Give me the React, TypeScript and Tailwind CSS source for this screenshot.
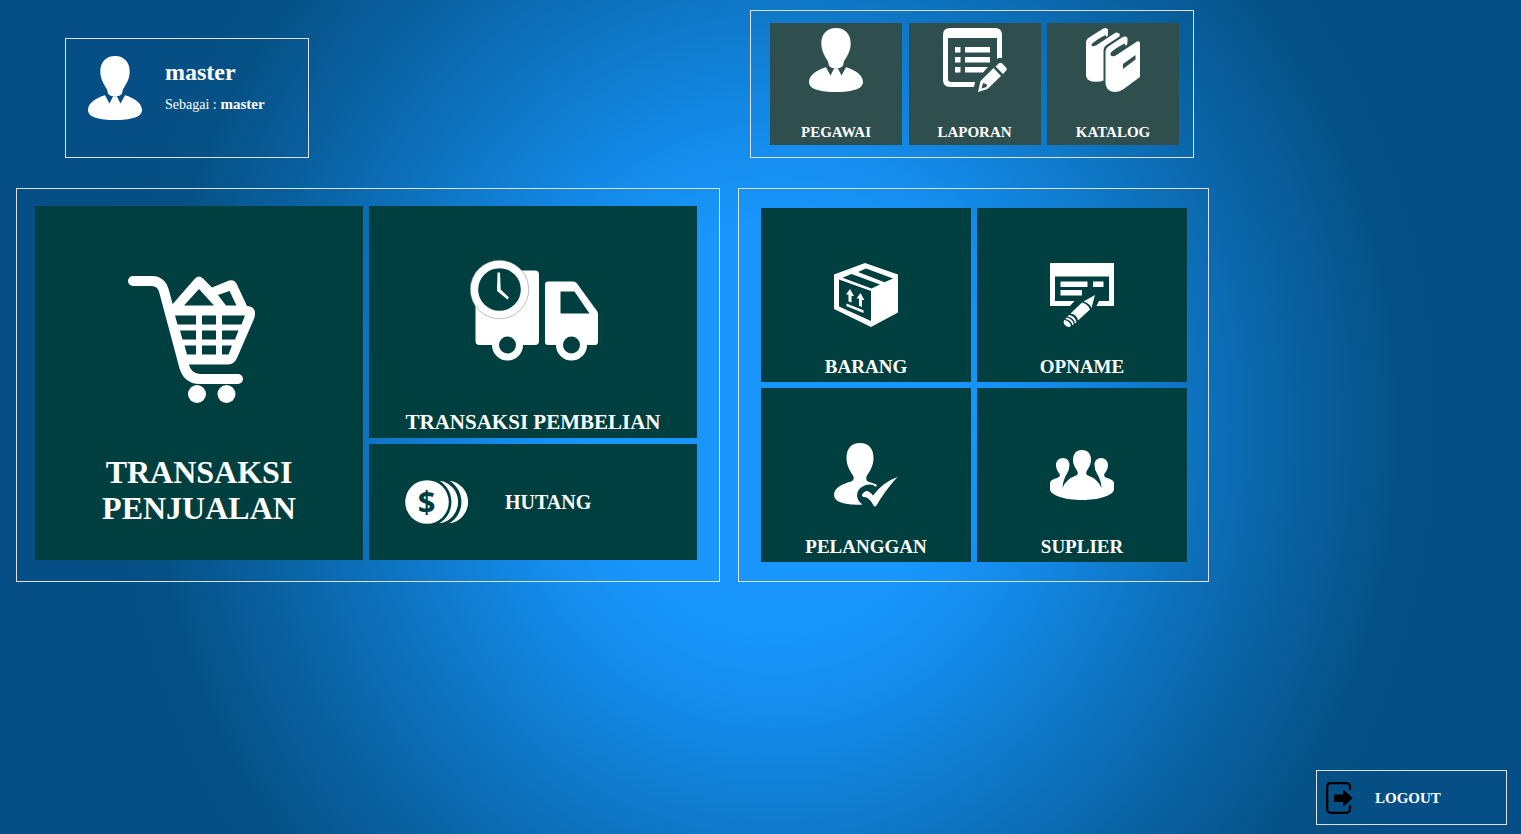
import type { ReactNode } from "react";

function UserIcon() {
  return (
    <svg viewBox="0 0 64 64" className="size-16 shrink-0 fill-white" aria-hidden="true">
      <path d="M32 0C41 0 46.7 6 46.7 15.5C46.7 24 42 29.5 39.7 34C39.5 38.5 37.5 40.3 32 40.3C26.5 40.3 24.5 38.5 24.3 34C22 29.5 17.3 24 17.3 15.5C17.3 6 23 0 32 0Z" />
      <path d="M22 39.3L26.5 47.5L30.3 40Q32 40.8 33.7 40L37.5 47.5L42 39.3C51 42 59 47 59 54C59 61.5 47 64 32 64C17 64 5 61.5 5 54C5 47 13 42 22 39.3Z" />
    </svg>
  );
}

function ReportIcon() {
  return (
    <svg viewBox="0 0 64 64" className="size-16 fill-white" aria-hidden="true">
      <path d="M7 0H52Q59 0 59 7V30Q56 29 54 31V10H5V51Q5 54 8 54H32L31 59H7Q0 59 0 52V7Q0 0 7 0Z" />
      <path d="M12 19H17.5V24.5H12ZM12 29H17.5V34.5H12ZM12 39H17.5V44.5H12ZM22 19H47V24.5H22ZM22 29H47V34.5H22ZM22 39H45L40 44.5H22Z" />
      <path d="M52.5 38.5L56 35.3Q57.5 34 59 35.3L63 39.5Q64.5 41 63 42.8L60 46Z" />
      <path fillRule="evenodd" d="M50.5 40L58 48L44.5 61L35 64L37.5 53ZM40 55L38.5 60.5L43.5 59L44 56.5Z" />
    </svg>
  );
}

function BooksIcon() {
  return (
    <svg viewBox="0 0 64 64" className="size-16 fill-white" aria-hidden="true">
      <path d="M5 15Q5 11.5 8 9.5L22 .7Q25 -.8 27 1.5V6Q27 8.5 25.5 9L24.5 7Q13 13 10.5 16.5Q10 19.5 15 17.5L34 5Q36.5 3.5 38.8 6L38.5 8.5L25.5 17Q22.5 19 22.5 23V52.5Q18 54.5 11 53.5Q5 52 5 47Z" />
      <path d="M24.5 24Q24.5 20 28 18L41 9.5Q44.5 7.5 46.5 10V14.5Q46.5 17 44.5 17.5L43.5 15.5Q31 22 29.5 25.5Q29 29 34 28L56 13.5Q58.5 12.5 59 15V49L42 61.5Q38 64 33 64Q24.5 62.5 24.5 55Z" />
      <path d="M42 36L54.5 27V31.5L42 41Z" className="fill-[#2f4f4f]" />
    </svg>
  );
}

function CartIcon() {
  return (
    <svg viewBox="0 0 142 128" className="h-32 w-[142px] fill-white" aria-hidden="true">
      <path d="M5 5H24Q33 5 36 15L55.5 88Q59 103 72 103H110" fill="none" className="stroke-white" strokeWidth="10" strokeLinecap="round" />
      <path d="M43 30L67 2.5Q71 -1.5 75 2.5L84 11.5L101 4.5Q106 3 108.5 7.5L119 30Q127 30 127 38Q127 41 125.5 44L109 82Q106 88.5 100 88.5H58Z" />
      <g className="fill-[#003f3f]">
        <path d="M56 29.5L71 13L86 29.5ZM90 19L101.5 15L108.5 29.5H98Z" />
        <path d="M47 39.5H68V48.5H49.5ZM74 39.5H88V48.5H74ZM94 39.5H117L113.5 48.5H94Z" />
        <path d="M52 54.5H68V63.5H54.5ZM74 54.5H88V63.5H74ZM94 54.5H110.5L107 63.5H94Z" />
        <path d="M56.5 69.5H68V78.5H59ZM74 69.5H88V78.5H74ZM94 69.5H104L100.5 78.5H94Z" />
      </g>
      <circle cx="69" cy="118" r="9" />
      <circle cx="98.5" cy="118" r="9" />
    </svg>
  );
}

function TruckIcon() {
  return (
    <svg viewBox="-2 0 130 102" className="h-[102px] w-[130px] fill-white" aria-hidden="true">
      <rect x="5.5" y="10.5" width="63.5" height="74.5" rx="4" />
      <path d="M78 21.5H103Q105.5 21.5 107 23.5L127 51Q128 52.5 128 54V82Q128 85 125 85H78Q75 85 75 82V24.5Q75 21.5 78 21.5Z" />
      <circle cx="37.5" cy="85" r="15.5" />
      <circle cx="101.5" cy="85" r="15.5" />
      <circle cx="29.5" cy="29.5" r="29.2" className="stroke-[#6f8585]" strokeWidth=".5" />
      <g className="fill-[#003f3f]">
        <circle cx="29.5" cy="29.5" r="21.3" />
        <circle cx="37.5" cy="85" r="8.5" />
        <circle cx="101.5" cy="85" r="8.5" />
        <path d="M90.5 31.5H104.5L119.5 53.5H90.5Z" />
      </g>
      <path d="M27.5 12.5H30L30.7 29.5L39 37.5L37.5 39.5L27 31Z" />
    </svg>
  );
}

function CoinsIcon() {
  return (
    <svg viewBox="0 0 64 44" className="h-11 w-16 shrink-0 fill-white" aria-hidden="true">
      <circle cx="22" cy="22" r="21.8" />
      <path d="M34.5 .7A21.5 21.5 0 0 1 34.5 43.3A25 25 0 0 0 34.5 .7Z" />
      <path d="M44.5 .7A21.5 21.5 0 0 1 44.5 43.3A25 25 0 0 0 44.5 .7Z" />
      <text x="21.5" y="33" textAnchor="middle" className="fill-[#003f3f] font-['Open_Sans',sans-serif] text-[31px] font-bold">$</text>
    </svg>
  );
}

function BoxIcon() {
  return (
    <svg viewBox="0 0 64 64" className="size-16 fill-white" aria-hidden="true">
      <path d="M31 0L64 11.5V49.5L37 64L0 46V11.5Z" />
      <g className="fill-[#003f3f]">
        <path d="M5 16.5L37 28V58L5 43.5Z" />
        <path d="M8.5 14.8L17.5 11L46 21.5L37.5 25.5Z" />
        <path d="M24 9L32 5.5L59 15.5L50.5 19.2Z" />
      </g>
      <path d="M16 26L20 33H17.5V39.5L14.5 38.5V31.5H12ZM26.5 30L30.3 37H28V44L25 42.8V35.5H22.5ZM12.5 40.5L29.5 47.3V50L12.5 43.2Z" />
    </svg>
  );
}

function StockIcon() {
  return (
    <svg viewBox="0 0 64 64" className="size-16 fill-white" aria-hidden="true">
      <path d="M0 0H64V43H46.5L49 38H59V13.5H5V38H24.5L20 43H0Z" />
      <path d="M10.5 18.5H37.5V24H10.5ZM43 18.5H53.5V24H43ZM10.5 27H32V32.5H10.5Z" />
      <path d="M45 32L41.5 45Q40 40.5 33.5 38.5Z" />
      <path d="M32 39.5Q38 41 40 46.5L28 57.5Q27 51.5 20.5 50.5Z" />
      <path d="M19 52Q25 53 26.5 59L25 60.5Q23.5 54.5 17.5 53.5Z" />
      <path d="M16.5 54.5Q22.5 55.5 23.8 61L22.5 62.2Q21 57 15.3 56Z" />
      <path d="M14.3 57Q20 58 21 63Q18 65 15.5 62.5Q12.5 60 14.3 57Z" />
    </svg>
  );
}

function CustomerIcon() {
  return (
    <svg viewBox="0 0 64 64" className="size-16 fill-white" aria-hidden="true">
      <path d="M26 0C35 0 39.5 6 39.5 15C39.5 24 35 29 32.5 33.5Q31.5 37 34 38.5L42.5 41.5Q43 42.5 42 44Q38 40.5 32 42Q23 45 23 52.5Q23.5 58 28.5 61.5C12 62.5 0 59.5 0 52C0 45 8 41 17 38.5Q20.5 37 19.5 33.5C17 29 12.5 24 12.5 15C12.5 6 17 0 26 0Z" />
      <path d="M28 51.5Q32.5 44 39 52.5Q49 39 63.5 34Q51 47.5 42.5 62.5Q41 64.5 39.5 62.5Q35 53.5 29.5 54Q27.5 53.5 28 51.5Z" />
    </svg>
  );
}

function SupplierIcon() {
  return (
    <svg viewBox="0 0 64 64" className="size-16 fill-white" aria-hidden="true">
      <path d="M32 7C38 7 41 11 41 17C41 22 38 26 36.5 28.5Q35.5 31.5 38 32.5Q48 36 51.5 45Q51 37 47.5 31.5Q44.5 27 44.5 22C44.5 18 47 15 51 15C55 15 58 18 58 22C58 27 55 29.5 54 32Q54 34 57 35Q64 37 64 40V47C62 53 48 57 32 57C16 57 2 53 0 47V40Q0 37 7 35Q10 34 10 32C9 29.5 6 27 6 22C6 18 9 15 13 15C17 15 19.5 18 19.5 22Q19.5 27 16.5 31.5Q13 37 12.5 45Q16 36 26 32.5Q28.5 31.5 27.5 28.5C26 26 23 22 23 17C23 11 26 7 32 7Z" />
    </svg>
  );
}

function LogoutIcon() {
  return (
    <svg viewBox="0 0 27 32" className="h-8 w-[27px] fill-black" aria-hidden="true">
      <path d="M24 8V5Q24 1.2 20 1.2H5Q1.2 1.2 1.2 5V27Q1.2 30.8 5 30.8H20Q24 30.8 24 27V23" fill="none" stroke="#000" strokeWidth="2.2" />
      <path d="M9 12.5H17V8.5Q17 7.5 18 8.2L26.2 15.5Q26.7 16 26.2 16.5L18 24Q17 24.8 17 23.5V20H9Q8 20 8 19V13.5Q8 12.5 9 12.5Z" />
    </svg>
  );
}

function TopTile({ icon, label }: { icon: ReactNode; label: string }) {
  return (
    <button className="flex h-[122px] w-[132px] flex-col items-center justify-between bg-[#2f4f4f] pt-[5px] pb-1 text-[15px] leading-[18px] font-bold">
      {icon}
      {label}
    </button>
  );
}

function MasterTile({ icon, label }: { icon: ReactNode; label: string }) {
  return (
    <button className="flex h-[174px] flex-col items-center justify-between bg-[#003f3f] pt-[55px] pb-1 text-[19px] leading-[22px] font-bold">
      {icon}
      {label}
    </button>
  );
}

export default function App() {
  return (
    <div className="flex min-h-screen flex-col bg-[#054f86] bg-[radial-gradient(660px_720px_at_51%_51%,#1896fc_0%,#1896fc_28%,#148cec_40%,#0f78c8_58%,#0a64a6_76%,#055084_96%,#054f86_108%)] font-['Liberation_Serif',serif] text-white">
      <main className="grid grid-cols-[minmax(0,704px)_minmax(0,471px)] gap-x-[18px] gap-y-[30px] px-4 pt-[10px]">
        <section className="ml-[49px] flex h-[120px] w-[244px] items-start gap-[18px] self-end border border-[#e0e0e0] p-[17px]">
          <UserIcon />
          <div className="pt-[2px]">
            <h1 className="text-[24px] leading-[28px] font-bold">master</h1>
            <p className="mt-1 text-[15px] leading-[28px]">
              <span className="text-[14px]">Sebagai :</span> <b>master</b>
            </p>
          </div>
        </section>

        <nav className="ml-3 flex w-[444px] justify-between border border-[#e0e0e0] py-3 pr-[14px] pl-[19px]">
          <TopTile icon={<UserIcon />} label="PEGAWAI" />
          <TopTile icon={<ReportIcon />} label="LAPORAN" />
          <TopTile icon={<BooksIcon />} label="KATALOG" />
        </nav>

        <section className="grid grid-cols-2 gap-[6px] border border-[#e0e0e0] pt-[17px] pr-[22px] pb-[21px] pl-[18px]">
          <button className="row-span-2 flex flex-col items-center justify-between bg-[#003f3f] px-12 pt-[70px] pb-[34px] text-[32px] leading-[36px] font-bold">
            <CartIcon />
            TRANSAKSI PENJUALAN
          </button>
          <button className="flex h-[232px] flex-col items-center justify-between bg-[#003f3f] pt-[54px] pb-1 text-[21px] leading-[24px] font-bold">
            <TruckIcon />
            TRANSAKSI PEMBELIAN
          </button>
          <button className="flex h-[116px] items-center gap-9 bg-[#003f3f] pl-9 text-[20px] leading-[24px] font-bold">
            <CoinsIcon />
            HUTANG
          </button>
        </section>

        <section className="grid grid-cols-2 gap-[6px] border border-[#e0e0e0] py-[19px] pr-[21px] pl-[22px]">
          <MasterTile icon={<BoxIcon />} label="BARANG" />
          <MasterTile icon={<StockIcon />} label="OPNAME" />
          <MasterTile icon={<CustomerIcon />} label="PELANGGAN" />
          <MasterTile icon={<SupplierIcon />} label="SUPLIER" />
        </section>
      </main>

      <footer className="mt-auto flex justify-end pr-[14px] pb-[9px]">
        <button className="flex h-[55px] w-[191px] items-center gap-[22px] border border-[#e0e0e0] pl-[9px] text-[15px] leading-[18px] font-bold">
          <LogoutIcon />
          LOGOUT
        </button>
      </footer>
    </div>
  );
}
